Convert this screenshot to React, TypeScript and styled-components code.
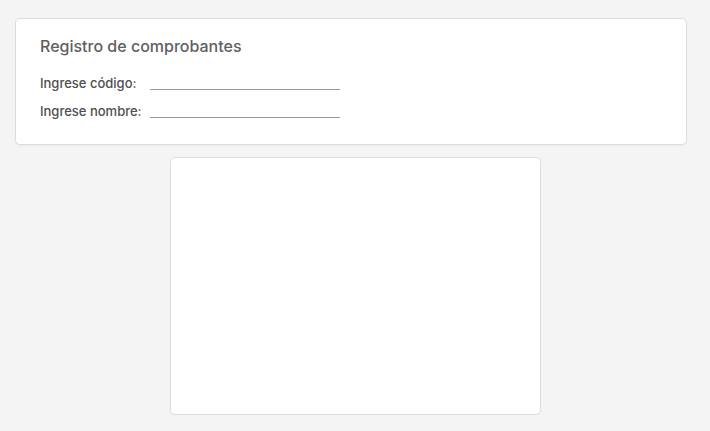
import React from "react";
import styled, { createGlobalStyle } from "styled-components";

const Global = createGlobalStyle`
  html, body { margin: 0; padding: 0; background: #f4f4f4; }
  body { font-family: Inter, "Liberation Sans", sans-serif; }
`;

const Page = styled.div`
  display: flex;
  flex-direction: column;
  align-items: center;
  gap: 12px;
  padding: 18px 23px 0 15px;
  box-sizing: border-box;
  width: 710px;
`;

const Card = styled.section`
  box-sizing: border-box;
  align-self: stretch;
  background: #fff;
  border: 1px solid #dddddd;
  border-radius: 5px;
  padding: 17px 24px 24px;
  box-shadow: 0 1px 2px rgba(0, 0, 0, 0.04);
`;

const Title = styled.h1`
  margin: 0 0 8px;
  font-size: 16px;
  line-height: 20px;
  font-weight: 500;
  color: #606060;
`;

const Form = styled.div`
  display: grid;
  grid-template-columns: auto 190px;
  grid-auto-rows: 28px;
  column-gap: 8px;
  align-items: end;
  justify-content: start;
`;

const Label = styled.label`
  font-size: 13px;
  line-height: 18px;
  font-weight: 550;
  color: #4f4f4f;
`;

const Input = styled.input`
  box-sizing: border-box;
  width: 190px;
  height: 20px;
  border: none;
  border-bottom: 1px solid #999999;
  background: transparent;
  outline: none;
  font: inherit;
  font-size: 13px;
  padding: 0;
  margin: 0 0 2px;
`;

const Panel = styled.div`
  box-sizing: border-box;
  width: 371px;
  height: 258px;
  background: #fff;
  border: 1px solid #dddddd;
  border-radius: 5px;
  box-shadow: 0 1px 2px rgba(0, 0, 0, 0.04);
  margin-left: 8px;
`;

export default function App() {
  return (
    <>
      <Global />
      <Page>
        <Card>
          <Title>Registro de comprobantes</Title>
          <Form>
            <Label htmlFor="codigo">Ingrese código:</Label>
            <Input id="codigo" />
            <Label htmlFor="nombre">Ingrese nombre:</Label>
            <Input id="nombre" />
          </Form>
        </Card>
        <Panel />
      </Page>
    </>
  );
}
